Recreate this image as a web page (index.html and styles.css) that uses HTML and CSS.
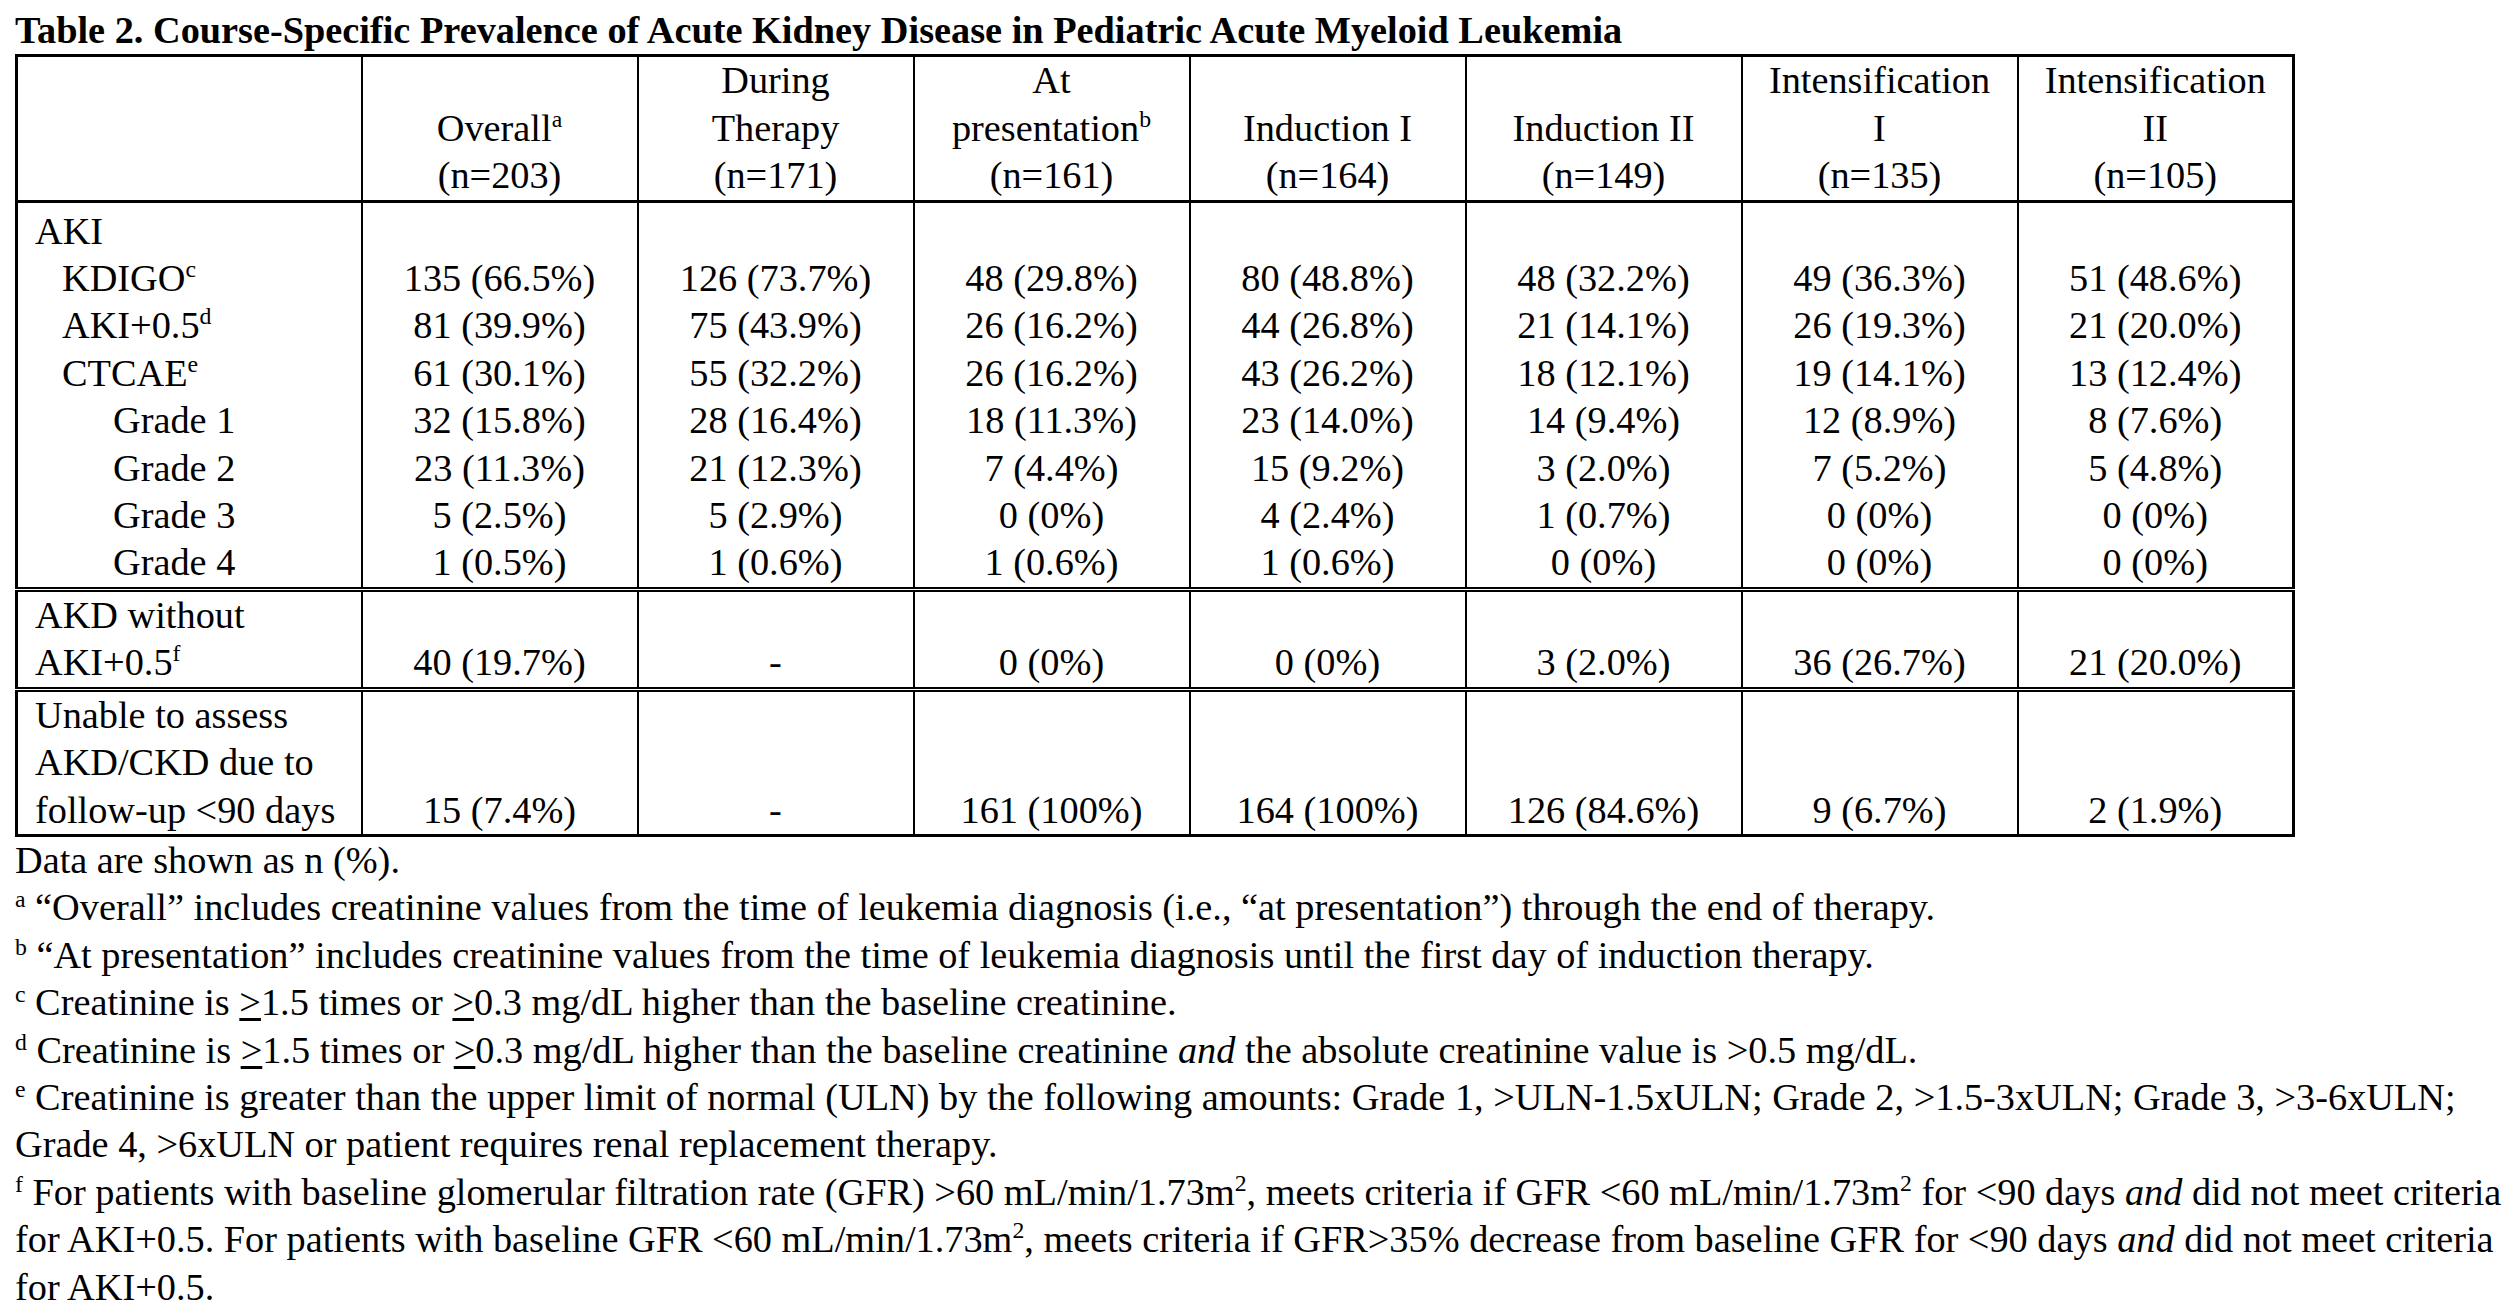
FILE: index.html
```html
<!DOCTYPE html>
<html lang="en">
<head>
<meta charset="utf-8">
<title>Table 2</title>
<link rel="stylesheet" href="styles.css">
</head>
<body>
<div class="page">
  <h1 class="title">Table 2. Course-Specific Prevalence of Acute Kidney Disease in Pediatric Acute Myeloid Leukemia</h1>
  <table class="data-table">
    <colgroup>
      <col class="c-label">
      <col class="c-val"><col class="c-val"><col class="c-val"><col class="c-val"><col class="c-val"><col class="c-val"><col class="c-val">
    </colgroup>
    <thead>
      <tr class="head-row">
        <th class="label"></th>
        <th>Overall<sup>a</sup><br>(n=203)</th>
        <th>During<br>Therapy<br>(n=171)</th>
        <th>At<br>presentation<sup>b</sup><br>(n=161)</th>
        <th>Induction I<br>(n=164)</th>
        <th>Induction II<br>(n=149)</th>
        <th>Intensification<br>I<br>(n=135)</th>
        <th>Intensification<br>II<br>(n=105)</th>
      </tr>
    </thead>
    <tbody class="group">
      <tr class="first">
        <td class="label">AKI</td>
        <td></td><td></td><td></td><td></td><td></td><td></td><td></td>
      </tr>
      <tr>
        <td class="label lv1">KDIGO<sup>c</sup></td>
        <td>135 (66.5%)</td><td>126 (73.7%)</td><td>48 (29.8%)</td><td>80 (48.8%)</td><td>48 (32.2%)</td><td>49 (36.3%)</td><td>51 (48.6%)</td>
      </tr>
      <tr>
        <td class="label lv1">AKI+0.5<sup>d</sup></td>
        <td>81 (39.9%)</td><td>75 (43.9%)</td><td>26 (16.2%)</td><td>44 (26.8%)</td><td>21 (14.1%)</td><td>26 (19.3%)</td><td>21 (20.0%)</td>
      </tr>
      <tr>
        <td class="label lv1">CTCAE<sup>e</sup></td>
        <td>61 (30.1%)</td><td>55 (32.2%)</td><td>26 (16.2%)</td><td>43 (26.2%)</td><td>18 (12.1%)</td><td>19 (14.1%)</td><td>13 (12.4%)</td>
      </tr>
      <tr>
        <td class="label lv2">Grade 1</td>
        <td>32 (15.8%)</td><td>28 (16.4%)</td><td>18 (11.3%)</td><td>23 (14.0%)</td><td>14 (9.4%)</td><td>12 (8.9%)</td><td>8 (7.6%)</td>
      </tr>
      <tr>
        <td class="label lv2">Grade 2</td>
        <td>23 (11.3%)</td><td>21 (12.3%)</td><td>7 (4.4%)</td><td>15 (9.2%)</td><td>3 (2.0%)</td><td>7 (5.2%)</td><td>5 (4.8%)</td>
      </tr>
      <tr>
        <td class="label lv2">Grade 3</td>
        <td>5 (2.5%)</td><td>5 (2.9%)</td><td>0 (0%)</td><td>4 (2.4%)</td><td>1 (0.7%)</td><td>0 (0%)</td><td>0 (0%)</td>
      </tr>
      <tr>
        <td class="label lv2">Grade 4</td>
        <td>1 (0.5%)</td><td>1 (0.6%)</td><td>1 (0.6%)</td><td>1 (0.6%)</td><td>0 (0%)</td><td>0 (0%)</td><td>0 (0%)</td>
      </tr>
    </tbody>
    <tbody class="single">
      <tr>
        <td class="label">AKD without<br>AKI+0.5<sup>f</sup></td>
        <td>40 (19.7%)</td><td>-</td><td>0 (0%)</td><td>0 (0%)</td><td>3 (2.0%)</td><td>36 (26.7%)</td><td>21 (20.0%)</td>
      </tr>
    </tbody>
    <tbody class="single">
      <tr>
        <td class="label">Unable to assess<br>AKD/CKD due to<br>follow-up &lt;90 days</td>
        <td>15 (7.4%)</td><td>-</td><td>161 (100%)</td><td>164 (100%)</td><td>126 (84.6%)</td><td>9 (6.7%)</td><td>2 (1.9%)</td>
      </tr>
    </tbody>
  </table>
  <div class="notes">
    <p>Data are shown as n (%).</p>
    <p><sup class="mark">a</sup> “Overall” includes creatinine values from the time of leukemia diagnosis (i.e., “at presentation”) through the end of therapy.</p>
    <p><sup class="mark">b</sup> “At presentation” includes creatinine values from the time of leukemia diagnosis until the first day of induction therapy.</p>
    <p><sup class="mark">c</sup> Creatinine is <span class="ge">&gt;</span>1.5 times or <span class="ge">&gt;</span>0.3 mg/dL higher than the baseline creatinine.</p>
    <p><sup class="mark">d</sup> Creatinine is <span class="ge">&gt;</span>1.5 times or <span class="ge">&gt;</span>0.3 mg/dL higher than the baseline creatinine <em>and</em> the absolute creatinine value is &gt;0.5 mg/dL.</p>
    <p><sup class="mark">e</sup> Creatinine is greater than the upper limit of normal (ULN) by the following amounts: Grade 1, &gt;ULN-1.5xULN; Grade 2, &gt;1.5-3xULN; Grade 3, &gt;3-6xULN; Grade 4, &gt;6xULN or patient requires renal replacement therapy.</p>
    <p><sup class="mark">f</sup> For patients with baseline glomerular filtration rate (GFR) &gt;60 mL/min/1.73m<sup>2</sup>, meets criteria if GFR &lt;60 mL/min/1.73m<sup>2</sup> for &lt;90 days <em>and</em> did not meet criteria for AKI+0.5. For patients with baseline GFR &lt;60 mL/min/1.73m<sup>2</sup>, meets criteria if GFR&gt;35% decrease from baseline GFR for &lt;90 days <em>and</em> did not meet criteria for AKI+0.5.</p>
  </div>
</div>
</body>
</html>
```

FILE: styles.css
```css
* { box-sizing: border-box; }

html, body {
  margin: 0;
  padding: 0;
  background: #ffffff;
}

body {
  font-family: "Liberation Serif", "Times New Roman", serif;
  font-size: 38.3px;
  line-height: 47.4px;
  color: #000000;
}

.page {
  padding: 7px 6px 0 15px;
}

.title {
  margin: 0;
  font-size: 38.3px;
  line-height: 47.4px;
  font-weight: bold;
}

sup {
  font-size: 0.62em;
  line-height: 0;
  vertical-align: 0.58em;
}

.data-table {
  border-collapse: collapse;
  table-layout: fixed;
  width: 2280px;
  border: 3px solid #000000;
}

.c-label { width: 345px; }
.c-val { width: 276px; }

.data-table th,
.data-table td {
  padding: 0;
  font-weight: normal;
  text-align: center;
  vertical-align: bottom;
  border-left: 2px solid #000000;
  border-right: 2px solid #000000;
  white-space: nowrap;
}

.head-row th {
  border-bottom: 3px solid #000000;
}

.data-table .label {
  text-align: left;
  padding-left: 17px;
}

.data-table .lv1 { padding-left: 44px; }
.data-table .lv2 { padding-left: 95px; }

.group .first td {
  padding-top: 5px;
}

.single td {
  border-top: 5px double #000000;
}

.notes p {
  margin: 0;
}

.notes .mark {
  font-size: 0.62em;
  vertical-align: 0.55em;
}

.ge {
  text-decoration: underline;
  text-underline-offset: 3px;
}
```
